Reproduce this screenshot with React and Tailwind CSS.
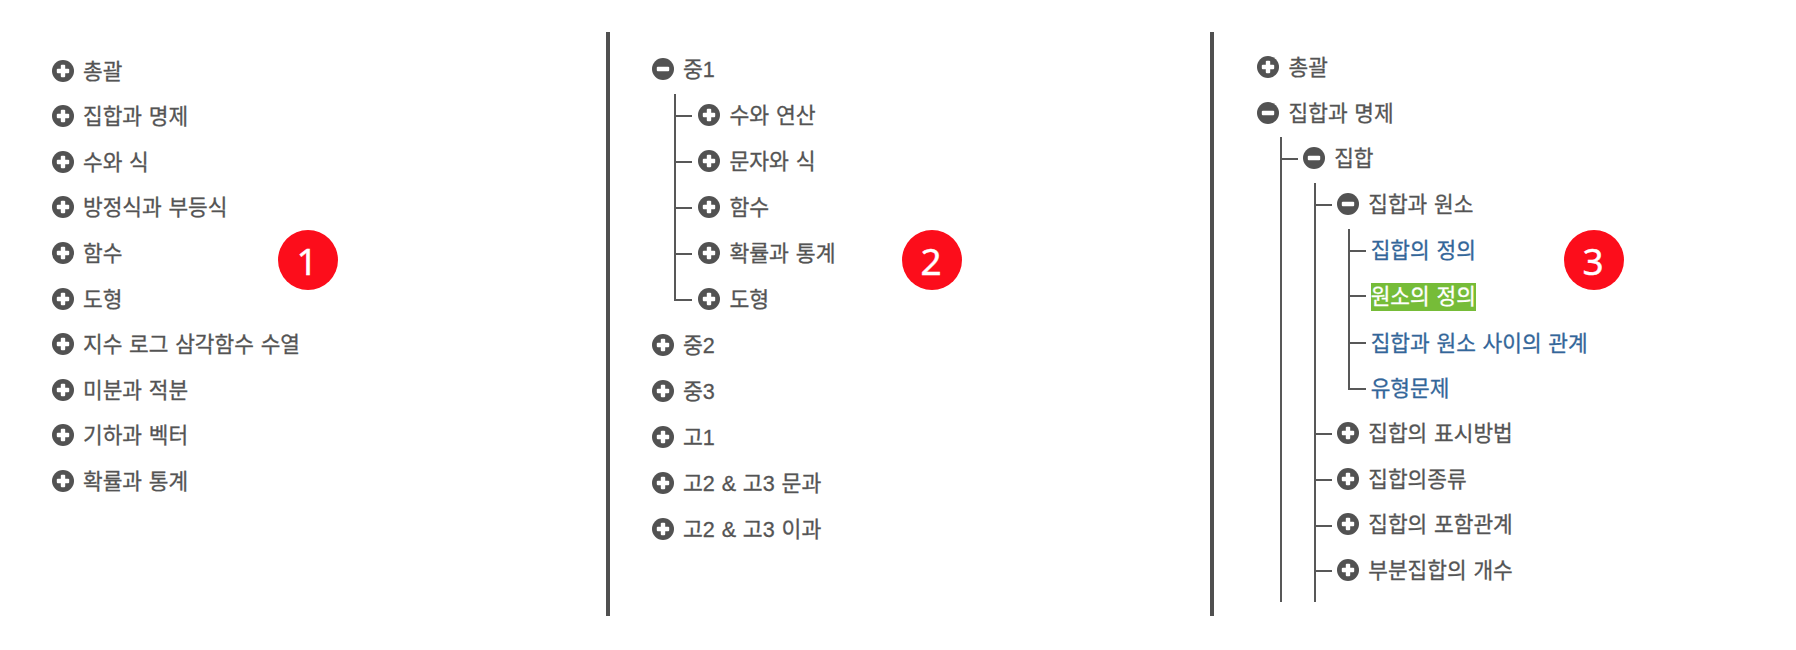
import React from "react";

const font = "font-['Liberation_Sans','Noto_Sans_CJK_KR',sans-serif]";

function ToggleIcon({ open }) {
  return (
    <svg className="mt-[9.8px] h-[22px] w-[22px] shrink-0" viewBox="0 0 22 22" aria-hidden="true">
      <circle cx="11" cy="11" r="11" fill="#525252" />
      <rect x="4.8" y="8.8" width="12.4" height="4.4" rx="1" fill="#fff" />
      {!open && <rect x="8.8" y="4.8" width="4.4" height="12.4" rx="1" fill="#fff" />}
    </svg>
  );
}

const tones = {
  folder: "text-[#545454]",
  link: "text-[#336699]",
  active: "bg-[#76bc38] text-white",
};

function Label({ tone, text, children }) {
  return (
    <span
      className={`h-[28px] whitespace-nowrap leading-[28px] [word-spacing:0.8px] [-webkit-text-stroke:0.3px_currentColor] ${text} ${tones[tone]}`}
    >
      {children}
    </span>
  );
}

function Branch({ end }) {
  return (
    <div className="flex w-[18px] shrink-0 flex-col">
      <div className="h-[23px] shrink-0 border-b-2 border-l-2 border-[#585858]" />
      {!end && <div className="grow border-l-2 border-[#585858]" />}
    </div>
  );
}

function Node({ item, size, text }) {
  const { label, leaf, children, indent = "pl-[22.6px]", inset = "pl-[5.4px]", tall } = item;
  return (
    <div className="flex flex-col">
      <div className={`flex items-start ${tall || size}`}>
        {leaf ? (
          <div className="flex pt-[8.6px] pl-[4.8px]">
            <Label tone={leaf} text={text}>{label}</Label>
          </div>
        ) : (
          <>
            <ToggleIcon open={!!children} />
            <div className="flex pt-[7.8px] pl-[9.4px]">
              <Label tone="folder" text={text}>{label}</Label>
            </div>
          </>
        )}
      </div>
      {children && (
        <ul className={indent}>
          {children.map((child, i) => (
            <li key={child.label} className="flex">
              <Branch end={i === children.length - 1 && !child.more} />
              <div className={child.leaf ? "" : inset}>
                <Node item={child} size={size} text={text} />
              </div>
            </li>
          ))}
        </ul>
      )}
    </div>
  );
}

function Tree({ items, size, text }) {
  return (
    <ul>
      {items.map((item) => (
        <li key={item.label}>
          <Node item={item} size={size} text={text} />
        </li>
      ))}
    </ul>
  );
}

function Badge({ children, place }) {
  return (
    <div
      className={`absolute top-[230px] flex h-[60px] w-[60px] items-center justify-center rounded-full bg-[#fc0d1b] font-['Noto_Sans',sans-serif] text-[37px] leading-none text-white [-webkit-text-stroke:0.4px_currentColor] ${place}`}
    >
      <span className="pr-[2px]">{children}</span>
    </div>
  );
}

const subjects = [
  "총괄",
  "집합과 명제",
  "수와 식",
  "방정식과 부등식",
  "함수",
  "도형",
  "지수 로그 삼각함수 수열",
  "미분과 적분",
  "기하과 벡터",
  "확률과 통계",
].map((label) => ({ label }));

const grades = [
  {
    label: "중1",
    inset: "pl-[5.8px]",
    children: [
      { label: "수와 연산" },
      { label: "문자와 식" },
      { label: "함수" },
      { label: "확률과 통계" },
      { label: "도형" },
    ],
  },
  { label: "중2" },
  { label: "중3" },
  { label: "고1" },
  { label: "고2 & 고3 문과" },
  { label: "고2 & 고3 이과" },
];

const detail = [
  { label: "총괄" },
  {
    label: "집합과 명제",
    inset: "pl-[5px]",
    children: [
      {
        label: "집합",
        more: true,
        indent: "pl-[11.5px]",
        inset: "pl-[4.6px]",
        children: [
          {
            label: "집합과 원소",
            indent: "pl-[11px]",
            children: [
              { label: "집합의 정의", leaf: "link" },
              { label: "원소의 정의", leaf: "active", tall: "h-[47px]" },
              { label: "집합과 원소 사이의 관계", leaf: "link" },
              { label: "유형문제", leaf: "link" },
            ],
          },
          { label: "집합의 표시방법" },
          { label: "집합의종류" },
          { label: "집합의 포함관계" },
          { label: "부분집합의 개수", more: true, tall: "h-[53px]" },
        ],
      },
    ],
  },
];

export default function App() {
  return (
    <main className={`relative flex h-[650px] w-[1796px] overflow-hidden bg-white pt-[32px] pb-[34px] ${font}`}>
      <section className="w-[606px] shrink-0 pt-[17.9px] pl-[51.6px]">
        <Tree items={subjects} size="h-[45.6px]" text="text-[21.4px]" />
        <Badge place="left-[278px]">1</Badge>
      </section>
      <section className="w-[604px] shrink-0 border-l-4 border-[#505050] pt-[16px] pl-[41.6px]">
        <Tree items={grades} size="h-[46px]" text="text-[21.6px]" />
        <Badge place="left-[902px]">2</Badge>
      </section>
      <section className="w-[586px] shrink-0 border-l-4 border-[#505050] pt-[14.3px] pl-[43.2px]">
        <Tree items={detail} size="h-[45.6px]" text="text-[21.4px]" />
        <Badge place="left-[1564px]">3</Badge>
      </section>
    </main>
  );
}
